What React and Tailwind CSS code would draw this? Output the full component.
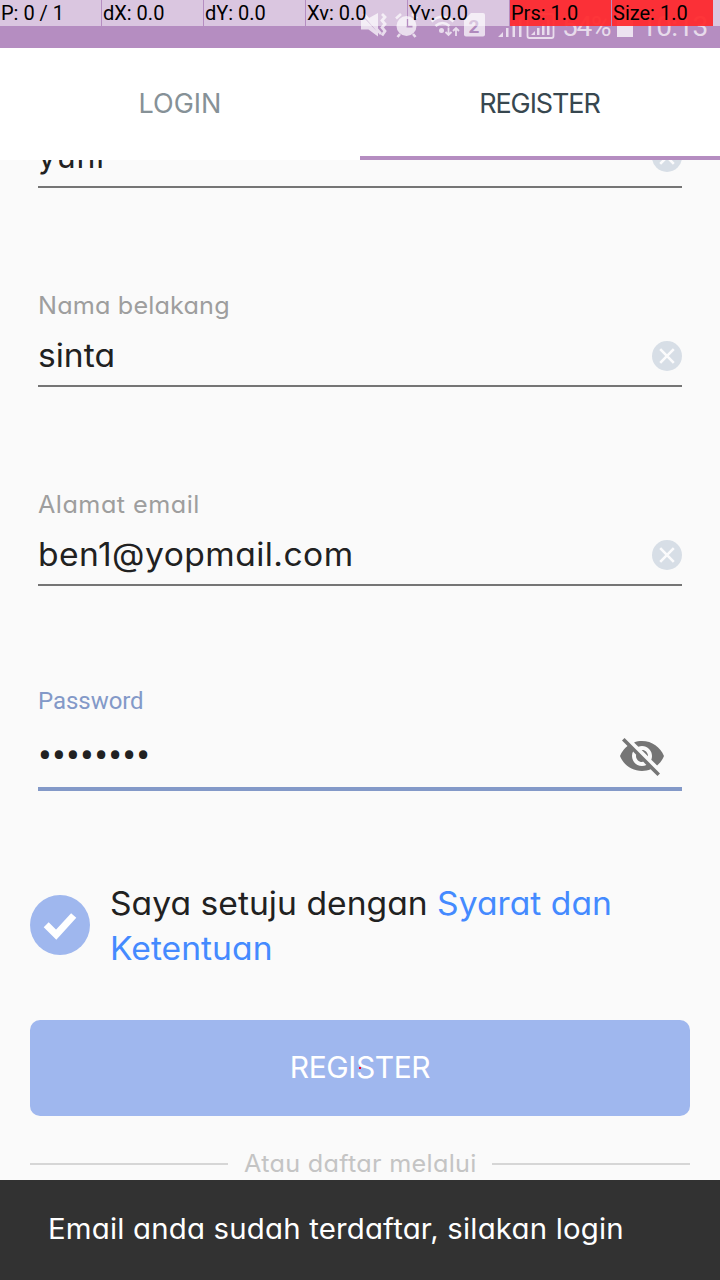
import { MdVisibilityOff } from "react-icons/md";

const geometric = "font-['Inter','Open_Sans',sans-serif] [font-feature-settings:'cv11'_1]";
const wide = "inline-block origin-left scale-x-105 whitespace-nowrap";

const pointerCells = [
  { text: "P: 0 / 1", tone: "bg-white/50" },
  { text: "dX: 0.0", tone: "bg-white/50" },
  { text: "dY: 0.0", tone: "bg-white/50" },
  { text: "Xv: 0.0", tone: "bg-white/50" },
  { text: "Yv: 0.0", tone: "bg-white/50" },
  { text: "Prs: 1.0", tone: "bg-[#ff2a2ef0]" },
  { text: "Size: 1.0", tone: "bg-[#ff2a2ef0]" },
];

function PointerOverlay() {
  return (
    <div className="absolute inset-x-0 top-0 flex h-[26px] gap-px font-['Roboto',sans-serif] text-[20px] leading-[26px] text-black">
      {pointerCells.map((cell) => (
        <div key={cell.text} className={`w-[101px] shrink-0 whitespace-nowrap pl-px ${cell.tone}`}>
          {cell.text}
        </div>
      ))}
      <div className="-ml-px grow bg-white/50" />
    </div>
  );
}

function StatusIcons() {
  return (
    <svg className="ml-[360px] h-12 w-[200px] shrink-0" viewBox="360 0 200 48" fill="currentColor">
      <path d="M369 18l9-5v16.500zM361 19.500h4.500L378 32.500v4l-9.500-7H361zM362.500 14.500l2-2L382 33l-2 2z" />
      <path d="M382 14l3 3-3 3.500 3 3.500-3 3.500 3 3.500-3 4.500" fill="none" stroke="currentColor" strokeWidth="2.800" />
      <circle cx="406.500" cy="26" r="10" />
      <path d="M396 18.500l5-4.500M417 18.500l-5-4.500M400 34l-2.500 3M413 34l2.500 3" stroke="currentColor" strokeWidth="2.600" />
      <path d="M407.500 19v7.500h5" fill="none" stroke="#b58dc1" strokeWidth="1.800" />
      <g fill="none" stroke="currentColor" strokeWidth="2.600">
        <path d="M431.500 21.500q11-9.500 22 0" />
        <path d="M435.500 26q7-6 14 0" />
        <path d="M448.500 27.500v7.500M445.500 32l3 3 3-3M456 36v-8M453 31l3-3 3 3" strokeWidth="1.800" />
      </g>
      <circle cx="441.500" cy="30.500" r="2.500" />
      <path d="M471 13h12a2 2 0 0 1 2 2v19.500a2 2 0 0 1-2 2h-17a2 2 0 0 1-2-2V20z" />
      <text x="474" y="32.500" textAnchor="middle" fill="#b08abd" className="font-['Roboto',sans-serif] text-[19px] font-bold">2</text>
      <path d="M498 37l5-5v5zM506 28h2.500v9H506zM512.500 24h2.500v13h-2.500zM519 19h2.500v18H519z" />
      <rect x="527.500" y="14" width="26" height="24" rx="2" fill="none" stroke="currentColor" strokeWidth="1.800" />
      <path d="M531 35l4-4v4zM537 28h2.500v7H537zM542 24h2.500v11H542zM547 20h2.500v15H547z" />
    </svg>
  );
}

function StatusBar() {
  return (
    <div className="relative h-12 bg-[#b58dc1]">
      <div className="flex h-12 text-white/70">
        <StatusIcons />
        <div className="flex h-12 items-start pt-[10px] font-['Roboto',sans-serif] text-[28px] leading-[34px]">
          <span className="ml-[2px] w-[55px] whitespace-nowrap tracking-[-1.2px]">54%</span>
          <span className="mt-[3px] h-[24px] w-4 bg-white/75" />
          <span className="ml-[8px] whitespace-nowrap tracking-[-0.6px]">10:13</span>
        </div>
      </div>
      <PointerOverlay />
    </div>
  );
}

function Tabs() {
  return (
    <div className={`grid h-28 grid-cols-2 bg-white text-[27px] leading-10 ${geometric}`}>
      <div className="flex items-center justify-center text-[#869197]">LOGIN</div>
      <div className="flex items-center justify-center border-b-4 border-[#b58dc1] pr-px pt-1 tracking-[-1.1px] text-[#37474f]">
        REGISTER
      </div>
    </div>
  );
}

function ClearIcon() {
  return (
    <svg className="mt-[2px] size-[30px]" viewBox="0 0 30 30">
      <circle cx="15" cy="15" r="15" fill="#d7dee6" />
      <path d="M8.200 8.200l13.600 13.600M21.800 8.200l-13.600 13.600" stroke="#fbfbfc" strokeWidth="2.600" />
    </svg>
  );
}

function FieldValue({ children }) {
  return (
    <div className="flex h-[62px] items-center justify-between border-b-2 border-[#757575] text-[32px] leading-[58px] text-[#212121]">
      <div className="pt-[2px]">{children}</div>
      <ClearIcon />
    </div>
  );
}

function FieldLabel({ children }) {
  return <div className="mb-1 mt-[103px] h-[30px] text-[24px] leading-[30px] text-[#9e9e9e]">{children}</div>;
}

export default function App() {
  return (
    <div className="flex h-[1280px] w-[720px] flex-col overflow-hidden bg-[#fafafa]">
      <StatusBar />
      <Tabs />
      <main className={`h-[1020px] shrink-0 overflow-hidden ${geometric}`}>
        <div className="mx-[38px] -mt-[34px]">
          <FieldValue><span className="tracking-[0.8px]">yuni</span></FieldValue>
          <FieldLabel><span className={`${wide} tracking-[0.15px]`}>Nama belakang</span></FieldLabel>
          <FieldValue><span className={wide}>sinta</span></FieldValue>
          <FieldLabel><span className={`${wide} tracking-[0.45px]`}>Alamat email</span></FieldLabel>
          <FieldValue><span className={`${wide} tracking-[0.42px]`}>ben1@yopmail.com</span></FieldValue>
          <div className="mt-[99px] h-8 font-['Roboto',sans-serif] text-[24px] leading-8 tracking-[-0.05px] text-[#8399c8]">
            Password
          </div>
          <div className="flex h-[74px] items-center justify-between border-b-4 border-[#8399c8] pr-4 pt-[8px]">
            <span className="font-['Roboto',sans-serif] text-[41px] leading-10 tracking-[0.2px] text-[#212121]">
              ••••••••
            </span>
            <MdVisibilityOff className="size-12 text-[#757575]" />
          </div>
        </div>

        <div className="mx-[30px] mt-[89px] flex h-[90px] items-center gap-5">
          <svg className="size-[60px] shrink-0" viewBox="0 0 60 60">
            <circle cx="30" cy="30" r="30" fill="#9fb7ee" />
            <path d="M16.200 29.700L26.200 39.700L43.700 20.500" fill="none" stroke="#fff" strokeWidth="7" />
          </svg>
          <p className="origin-left scale-x-105 whitespace-nowrap pt-[2px] text-[32px] leading-[45px] tracking-[0.03px] text-[#212121]">
            Saya setuju dengan <span className="text-[#448aff]">Syarat dan<br />Ketentuan</span>
          </p>
        </div>

        <div className="relative mx-[30px] mt-[50px] flex h-24 items-center justify-center rounded-[10px] bg-[#9fb7ee] pb-[2px] text-[30px] leading-10 tracking-[-0.4px] text-white">
          REGISTER
          <span className="absolute left-[329px] top-[47px] size-[2px] bg-[#ff0022]" />
        </div>

        <div className="mx-[30px] mt-[30px] flex h-9 items-center gap-4 text-[24px] leading-9 text-[#c4c4c4]">
          <span className="h-[2px] flex-1 bg-[#d6d6d6]" />
          <div className="w-[232px]">
            <span className={`${wide} tracking-[0.28px]`}>Atau daftar melalui</span>
          </div>
          <span className="h-[2px] flex-1 bg-[#d6d6d6]" />
        </div>
      </main>
      <div className={`flex h-[100px] shrink-0 items-center bg-[#323232] pb-[2px] pl-12 text-[28px] text-white ${geometric}`}>
        <span className={`${wide} tracking-[0.17px]`}>Email anda sudah terdaftar, silakan login</span>
      </div>
    </div>
  );
}
